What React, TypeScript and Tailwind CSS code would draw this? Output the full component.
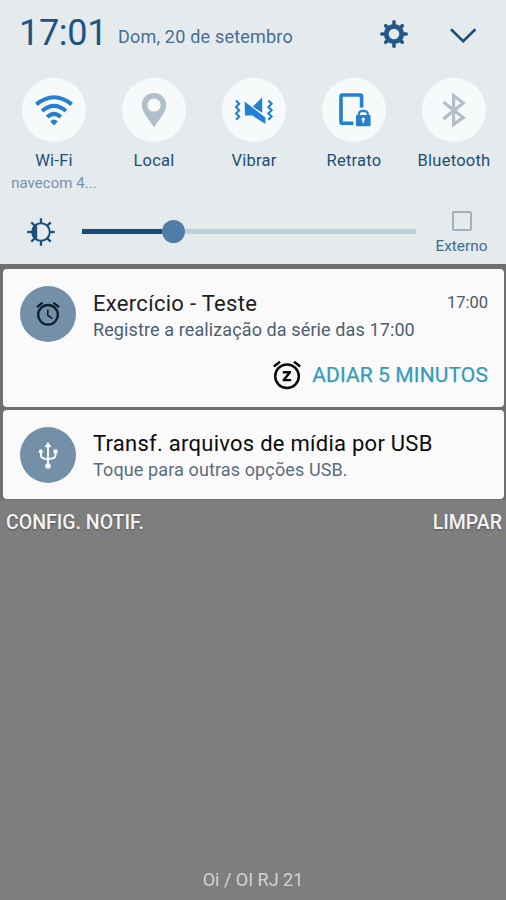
import React from "react";

const rays = [0, 45, 90, 135, 180, 225, 270, 315];

function GearIcon() {
  return (
    <svg className="block h-[30px] w-[30px]" viewBox="-15 -15 30 30" fill="none" stroke="#22588a">
      <circle r="7.7" strokeWidth="4.8" />
      {rays.map((a) => (
        <path key={a} d={a % 90 === 0 ? "M0 -9V-12.2" : "M0 -9V-11.8"} strokeWidth="3.6" strokeLinecap="round" transform={`rotate(${a})`} />
      ))}
    </svg>
  );
}

function ChevronIcon() {
  return (
    <svg className="block h-[18px] w-[30px]" viewBox="0 0 30 18" fill="none" stroke="#1c4f7d" strokeWidth="2.6">
      <path d="M3 3.2L15.2 15.2L27.4 3.2" />
    </svg>
  );
}

function WifiIcon() {
  return (
    <svg className="block h-16 w-16" viewBox="0 0 64 64" fill="none" stroke="#2480d0" strokeWidth="4">
      <path d="M14.3 26.4Q32 12.2 49.7 26.4" />
      <path d="M20 33Q32 22.6 44 33" />
      <path d="M25.2 39Q32 32.6 38.8 39" />
      <path d="M28.2 43.4Q32 39.6 35.8 43.4L32 47.6Z" fill="#2480d0" stroke="none" />
    </svg>
  );
}

function PinIcon() {
  return (
    <svg className="block h-16 w-16" viewBox="0 0 64 64" fill="#b0bfca">
      <path fillRule="evenodd" d="M32 15C25 15 19.8 20.2 19.8 27C19.8 34.6 27 41 32 49.6C37 41 44.2 34.6 44.2 27C44.2 20.2 39 15 32 15ZM32 20.4A6.6 6.6 0 1 1 32 33.6A6.6 6.6 0 1 1 32 20.4Z" />
    </svg>
  );
}

function VibrateIcon() {
  return (
    <svg className="block h-16 w-16" viewBox="0 0 64 64" fill="#2480d0">
      <path d="M30.8 28.6L40.2 19.2V34.8Z" />
      <path d="M22.6 23.6L43.4 39.6V46L33.6 39.8L30.6 37.4H23Z" />
      <g fill="none" stroke="#2480d0" strokeWidth="2.1">
        <path d="M14 22.6L17.2 25.8L14 29L17.2 32.2L14 35.4L17.2 38.6L14 41.8" />
        <path d="M46.4 22.6L49.6 25.8L46.4 29L49.6 32.2L46.4 35.4L49.6 38.6L46.4 41.8" />
      </g>
    </svg>
  );
}

function PortraitIcon() {
  return (
    <svg className="block h-16 w-16" viewBox="0 0 64 64" fill="none" stroke="#2480d0">
      <path d="M39.6 29.4V18.4Q39.6 17 38.2 17H20.4Q19 17 19 18.4V43.9Q19 45.3 20.4 45.3H31.4" strokeWidth="3.6" />
      <path d="M36.8 37.5V36.2Q36.8 32.8 41.3 32.8Q45.8 32.8 45.8 36.2V37.5" strokeWidth="2.2" />
      <rect x="34" y="37" width="14.6" height="11.2" rx="1" fill="#2480d0" stroke="none" />
      <circle cx="41.3" cy="41.2" r="1.6" fill="#f7fafb" stroke="none" />
      <path d="M41.3 41.5V45" stroke="#f7fafb" strokeWidth="1.5" />
    </svg>
  );
}

function BluetoothIcon() {
  return (
    <svg className="block h-16 w-16" viewBox="0 0 64 64" fill="none" stroke="#b0bfca" strokeWidth="3.2">
      <path d="M21.4 24L41.2 39.6L31.6 46.4V17.8L41.2 25L21.4 41" />
    </svg>
  );
}

function BrightnessIcon() {
  return (
    <svg className="block h-[30px] w-[30px]" viewBox="-15 -15 30 30" fill="none" stroke="#1c4f7d">
      <circle r="8.8" strokeWidth="2" />
      <path d="M-3.8 -8.4V8.4A9.3 9.3 0 0 1 -3.8 -8.4Z" fill="#1c4f7d" stroke="none" />
      {rays.map((a) => (
        <path key={a} d="M0 -9V-13.8" strokeWidth="2.3" transform={`rotate(${a})`} />
      ))}
    </svg>
  );
}

function AlarmIcon() {
  return (
    <svg className="block h-14 w-14" viewBox="0 0 56 56" fill="none" stroke="#12202b">
      <circle cx="28" cy="28.8" r="9.8" strokeWidth="2.3" />
      <path d="M17 21.2L22.6 16.6M33.4 16.6L39 21.2" strokeWidth="2.2" />
      <path d="M27.8 23.4V29.4L32.4 32.6" strokeWidth="1.6" />
    </svg>
  );
}

function UsbIcon() {
  return (
    <svg className="block h-14 w-14" viewBox="0 0 56 56" fill="none" stroke="#f4f8fa" strokeWidth="2">
      <path d="M28 18V39" />
      <path d="M21 24.5V28Q21 31 24 31.4L28 32.4L32 31.4Q35.5 31 35.5 28V24.5" />
      <path d="M28 14.8L31.6 20.2H24.4Z" fill="#f4f8fa" stroke="none" />
      <circle cx="28" cy="39" r="2.8" fill="#f4f8fa" stroke="none" />
      <circle cx="20.8" cy="24.4" r="2.1" fill="#f4f8fa" stroke="none" />
      <rect x="33.5" y="22.4" width="4" height="4" fill="#f4f8fa" stroke="none" />
    </svg>
  );
}

function SnoozeIcon() {
  return (
    <svg className="block h-[30px] w-[30px]" viewBox="0 0 30 30" fill="none" stroke="#0c0c0c">
      <circle cx="15" cy="16.2" r="11.8" strokeWidth="2.5" />
      <path d="M1.8 6.4L8 1.8M22 1.8L28.2 6.4" strokeWidth="2.5" />
      <path d="M10.8 11H19V12.8L14.2 18.9H19.2V21.3H10.6V19.5L15.4 13.4H10.8Z" fill="#0c0c0c" stroke="none" />
    </svg>
  );
}

type TileProps = { icon: React.ReactNode; label: string; sub?: string };

function Tile({ icon, label, sub }: TileProps) {
  return (
    <div className="flex w-[100px] flex-col items-center whitespace-nowrap">
      <div className="h-16 w-16 rounded-full bg-[#f7fafb]">{icon}</div>
      <div className="mt-[9px] text-[16.5px] leading-5 tracking-[0.25px] text-[#204f76]">{label}</div>
      {sub && <div className="mt-[2px] text-[15px] leading-5 tracking-[0.05px] text-[#7d92a8]">{sub}</div>}
    </div>
  );
}

function Slider() {
  return (
    <div className="ml-[26px] flex h-[23px] w-[334px] items-center">
      <div className="h-[5px] w-[80px] bg-[#164c7c]" />
      <div className="h-[23px] w-[23px] rounded-full bg-[#517ca7]" />
      <div className="h-[5px] flex-1 bg-[#c0ced9]" />
    </div>
  );
}

export default function App() {
  return (
    <div className="flex h-[900px] w-[506px] flex-col overflow-hidden whitespace-nowrap bg-[#7e7e7e] font-['Roboto',sans-serif]">
      <header className="h-[264px] shrink-0 bg-[#e5eaed]">
        <div className="flex h-[78px] items-start">
          <div className="ml-[19px] mt-[12px] w-[99px] text-[36px] leading-[42px] tracking-[-0.3px] text-[#1f5382]">17:01</div>
          <div className="mt-[25px] w-[261px] text-[18px] leading-6 tracking-[0.2px] text-[#486d91]">Dom, 20 de setembro</div>
          <div className="mt-[19px]"><GearIcon /></div>
          <div className="ml-[39px] mt-[26px]"><ChevronIcon /></div>
        </div>
        <div className="ml-[4px] flex h-[126px]">
          <Tile icon={<WifiIcon />} label="Wi-Fi" sub="navecom 4..." />
          <Tile icon={<PinIcon />} label="Local" />
          <Tile icon={<VibrateIcon />} label="Vibrar" />
          <Tile icon={<PortraitIcon />} label="Retrato" />
          <Tile icon={<BluetoothIcon />} label="Bluetooth" />
        </div>
        <div className="flex h-[60px] items-start">
          <div className="ml-[26px] mt-[13px]"><BrightnessIcon /></div>
          <div className="mt-[16px]"><Slider /></div>
          <div className="ml-[15px] mt-[7px] flex w-[61px] flex-col items-center">
            <div className="h-[20px] w-[20px] rounded-[2px] border-2 border-[#a3b0c0]" />
            <div className="mt-[5px] text-[15.4px] leading-5 text-[#3f6b92]">Externo</div>
          </div>
        </div>
      </header>

      <main className="flex shrink-0 flex-col gap-[3px] bg-[#6e706f] pb-px pl-[3px] pr-[2px] pt-[5px]">
        <section className="h-[138px] rounded-[4px] bg-[#fafafa]">
          <div className="flex h-[91px] items-start">
            <div className="ml-[17px] mt-[17px] h-14 w-14 rounded-full bg-[#7390a8]"><AlarmIcon /></div>
            <div className="ml-[17px] mt-[22px] w-[334px]">
              <div className="text-[22px] leading-[26px] tracking-[0.3px] text-[#1e2022]">Exercício - Teste</div>
              <div className="mt-[1px] text-[18px] leading-6 tracking-[0.11px] text-[#4c5f70]">Registre a realização da série das 17:00</div>
            </div>
            <div className="ml-auto mr-[16px] mt-[24px] text-[16.5px] leading-5 text-[#4a5967]">17:00</div>
          </div>
          <div className="flex items-start justify-end pr-[16px]">
            <SnoozeIcon />
            <div className="ml-[10px] mt-[3px] text-[21px] leading-6 tracking-[0.12px] text-[#359bbd] [-webkit-text-stroke:0.25px_#359bbd]">ADIAR 5 MINUTOS</div>
          </div>
        </section>
        <section className="flex h-[89px] items-start rounded-[4px] bg-[#fafafa]">
          <div className="ml-[17px] mt-[17px] h-14 w-14 rounded-full bg-[#7390a8]"><UsbIcon /></div>
          <div className="ml-[17px] mt-[21px]">
            <div className="text-[22px] leading-[26px] tracking-[0.26px] text-[#0c0c0c]">Transf. arquivos de mídia por USB</div>
            <div className="mt-[1px] text-[18px] leading-6 tracking-[0.12px] text-[#5a6d7d]">Toque para outras opções USB.</div>
          </div>
        </section>
      </main>

      <div className="flex justify-between pl-[6px] pr-[4px] pt-[11px] text-[19.5px] font-medium leading-6 text-[#f4f4f4] [text-shadow:0_1px_2px_rgb(0_0_0/0.35)]">
        <span>CONFIG. NOTIF.</span>
        <span>LIMPAR</span>
      </div>
      <footer className="mt-auto pb-[8px] text-center text-[18px] leading-6 text-[#d2d2d2]">Oi / OI RJ 21</footer>
    </div>
  );
}
